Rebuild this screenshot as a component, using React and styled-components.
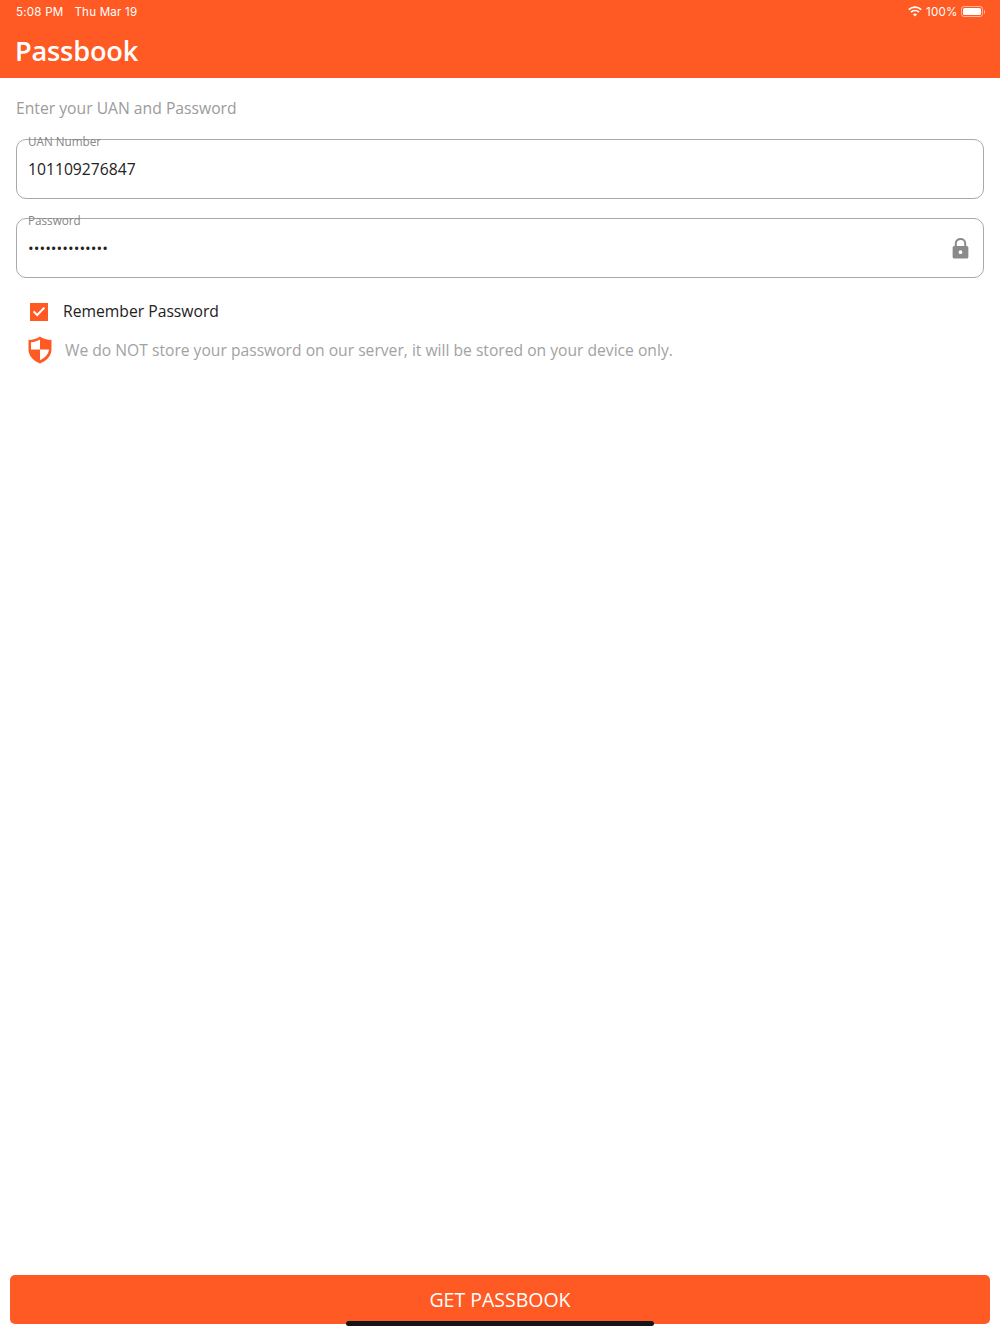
import React from 'react';
import styled, { createGlobalStyle } from 'styled-components';

const ORANGE = '#ff5a23';

const Global = createGlobalStyle`
html, body { margin: 0; padding: 0; background: #fff; }
* { box-sizing: border-box; }
`;

const Page = styled.div`
position: relative;
width: 1000px;
height: 1334px;
overflow: hidden;
display: flex;
flex-direction: column;
font-family: "Open Sans", sans-serif;
background: #fff;
`;

const Header = styled.header`
height: 78px;
background: ${ORANGE};
color: #fff;
display: flex;
flex-direction: column;
`;

const StatusBar = styled.div`
height: 23px;
padding: 0 15px 0 16px;
display: flex;
align-items: center;
justify-content: space-between;
font-family: Inter, "Liberation Sans", sans-serif;
font-size: 11.6px;
letter-spacing: 0.2px;
`;

const StatusGroup = styled.div`
display: flex;
align-items: center;
gap: ${(props) => props.$gap || 0}px;
`;

const Percent = styled.span`
margin: 0 3px 0 4px;
`;

const Title = styled.h1`
margin: 0;
padding: 0 0 0 15px;
font-size: 27.2px;
line-height: 55px;
font-weight: 600;
letter-spacing: -0.2px;
`;

const Form = styled.main`
flex: 1;
padding: 0 16px;
display: flex;
flex-direction: column;
`;

const Hint = styled.p`
margin: 19px 0 19px;
font-size: 15.7px;
line-height: 23px;
color: #9b9b9b;
`;

const Field = styled.div`
position: relative;
height: 60px;
margin-bottom: 19px;
padding: 0 11px;
display: flex;
align-items: center;
justify-content: space-between;
border: 1px solid #a9a9a9;
border-radius: 10px;
`;

const FieldLabel = styled.label`
position: absolute;
top: -7px;
left: 5px;
padding: 0 6px;
height: 16px;
background: linear-gradient(#fff 0 5px, transparent 5px);
font-size: 11.7px;
line-height: 16px;
color: #858585;
`;

const Value = styled.span`
font-size: 15.7px;
line-height: 22px;
color: #222;
`;

const Dots = styled.span`
font-size: 15.2px;
line-height: 22px;
color: #222;
`;

const LockWrap = styled.span`
display: flex;
margin-right: 3px;
`;

const Row = styled.div`
display: flex;
align-items: center;
padding-left: ${(props) => props.$left}px;
gap: ${(props) => props.$gap}px;
height: ${(props) => props.$height}px;
`;

const Checkbox = styled.span`
width: 18px;
height: 18px;
margin-top: -1px;
background: ${ORANGE};
display: flex;
align-items: center;
justify-content: center;
`;

const RememberText = styled.span`
font-size: 15.7px;
line-height: 28px;
color: #222;
margin-top: -2px;
`;

const Notice = styled.span`
font-size: 15.65px;
color: #a2a2a2;
`;

const SubmitButton = styled.button`
height: 49px;
margin: 0 10px 10px;
border: 0;
border-radius: 5px;
background: ${ORANGE};
color: #fff;
font-family: "Open Sans", sans-serif;
font-size: 19.5px;
display: flex;
align-items: center;
justify-content: center;
`;

const HomeIndicator = styled.div`
position: absolute;
left: 346px;
bottom: 8px;
width: 308px;
height: 5px;
border-radius: 3px;
background: #151515;
`;

const BatteryBody = styled.span`
width: 22px;
height: 11px;
padding: 1px;
border: 1px solid rgba(255, 255, 255, 0.55);
border-radius: 3px;
display: flex;
`;

const BatteryFill = styled.span`
flex: 1;
background: #fff;
border-radius: 1.5px;
`;

const BatteryCap = styled.span`
width: 1.5px;
height: 4px;
margin-left: 1px;
border-radius: 0 1px 1px 0;
background: rgba(255, 255, 255, 0.55);
`;

function Wifi() {
  return (
    <svg width="14" height="11" viewBox="0 0 14 11" fill="none" stroke="#fff" strokeWidth="1.7">
      <path d="M0.8 3.6C4.3 0.4 9.7 0.4 13.2 3.6" />
      <path d="M3 6C5.3 4 8.7 4 11 6" />
      <path d="M7 10.6L4.9 8.2C6.1 7.2 7.9 7.2 9.1 8.2Z" fill="#fff" stroke="none" />
    </svg>
  );
}

function Lock() {
  return (
    <svg width="17" height="21" viewBox="0 0 16 20">
      <path d="M3.5 8V5.2C3.5 2.7 5.5 1 8 1s4.5 1.700 4.500 4.200V8" fill="none" stroke="#8a8a8a" strokeWidth="1.9" />
      <path fillRule="evenodd" fill="#8a8a8a" d="M2 7.500h12a1.500 1.500 0 0 1 1.500 1.500v9a1.500 1.500 0 0 1-1.500 1.500H2A1.500 1.500 0 0 1 .5 18V9A1.500 1.500 0 0 1 2 7.500ZM8 11.700a1.800 1.800 0 1 0 0 3.600 1.800 1.800 0 0 0 0-3.600Z" />
    </svg>
  );
}

function Check() {
  return (
    <svg width="14" height="11" viewBox="0 0 14 11" fill="none" stroke="#fff" strokeWidth="2">
      <path d="M1.600 5.400L5.200 9L12.400 1.600" />
    </svg>
  );
}

function Shield() {
  return (
    <svg width="24" height="28" viewBox="0 0 24 28">
      <path fill={ORANGE} d="M12 .5C15 2.600 19 3.800 23.500 4v9c0 6.500-4.500 11.800-11.500 14.500C5 24.800.5 19.500.5 13V4C5 3.800 9 2.600 12 .5Z" />
      <path fill="#fff" d="M12 3.500C9.500 5 6.800 6 3 6.300V13.500H12ZM12 13.500V24.300C17 21.900 20.600 18 21 13.500Z" />
    </svg>
  );
}

export default function App() {
  return (
    <Page>
      <Global />
      <Header>
        <StatusBar>
          <StatusGroup $gap={11}>
            <span>5:08 PM</span>
            <span>Thu Mar 19</span>
          </StatusGroup>
          <StatusGroup>
            <Wifi />
            <Percent>100%</Percent>
            <BatteryBody><BatteryFill /></BatteryBody>
            <BatteryCap />
          </StatusGroup>
        </StatusBar>
        <Title>Passbook</Title>
      </Header>
      <Form>
        <Hint>Enter your UAN and Password</Hint>
        <Field>
          <FieldLabel>UAN Number</FieldLabel>
          <Value>101109276847</Value>
        </Field>
        <Field>
          <FieldLabel>Password</FieldLabel>
          <Dots>••••••••••••••</Dots>
          <LockWrap><Lock /></LockWrap>
        </Field>
        <Row $left={14} $gap={15} $height={30}>
          <Checkbox><Check /></Checkbox>
          <RememberText>Remember Password</RememberText>
        </Row>
        <Row $left={12} $gap={13} $height={46}>
          <Shield />
          <Notice>We do NOT store your password on our server, it will be stored on your device only.</Notice>
        </Row>
      </Form>
      <SubmitButton>GET PASSBOOK</SubmitButton>
      <HomeIndicator />
    </Page>
  );
}
